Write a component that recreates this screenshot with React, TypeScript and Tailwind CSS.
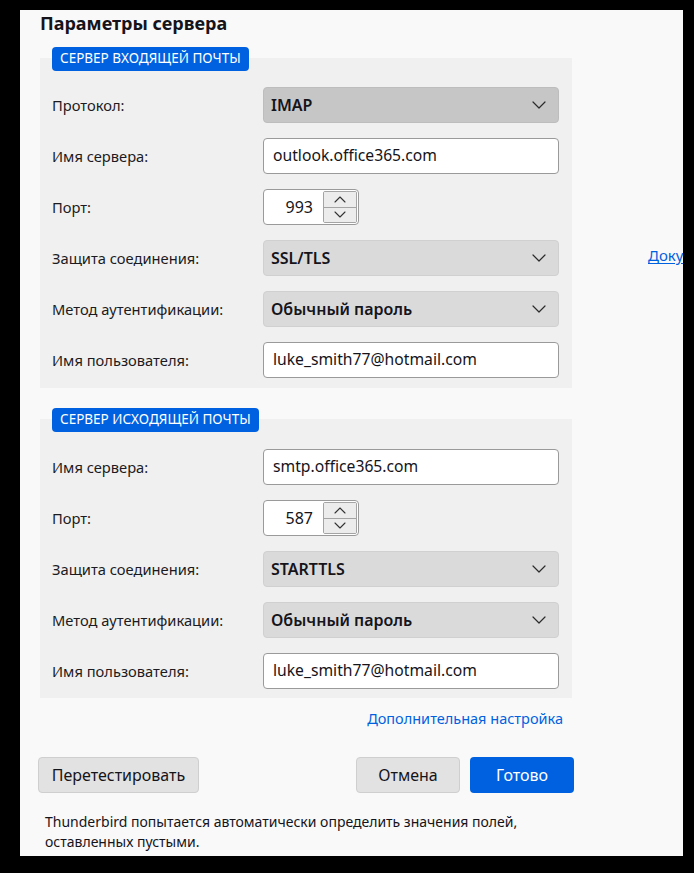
import React from "react";

const Chevron = () => (
  <svg width="14" height="8" viewBox="0 0 14 8" fill="none" className="shrink-0">
    <path d="M1 1l6 6 6-6" stroke="#2b2b2b" strokeWidth="1.2" strokeLinecap="round" strokeLinejoin="round" />
  </svg>
);

const SmallUp = () => (
  <svg width="12" height="7" viewBox="0 0 12 7" fill="none">
    <path d="M1 6l5-5 5 5" stroke="#333" strokeWidth="1.1" strokeLinecap="round" strokeLinejoin="round" />
  </svg>
);
const SmallDown = () => (
  <svg width="12" height="7" viewBox="0 0 12 7" fill="none">
    <path d="M1 1l5 5 5-5" stroke="#333" strokeWidth="1.1" strokeLinecap="round" strokeLinejoin="round" />
  </svg>
);

function Row({ label, children }: { label: string; children: React.ReactNode }) {
  return (
    <div className="flex items-center h-[36px]">
      <div className="w-[211px] shrink-0 text-[14.7px] text-[#1c1b22]">{label}</div>
      {children}
    </div>
  );
}

function Select({ value, dark }: { value: string; dark?: boolean }) {
  return (
    <div
      className={
        "flex items-center justify-between w-[296px] h-[36px] rounded-[4px] border pl-[7px] pr-[12px] " +
        (dark ? "bg-[#c6c6c6] border-[#bdbdbd]" : "bg-[#dadada] border-[#d0d0d0]")
      }
    >
      <span className="text-[16px] font-semibold text-[#15141a]">{value}</span>
      <Chevron />
    </div>
  );
}

function TextInput({ value }: { value: string }) {
  return (
    <div className="flex items-center w-[296px] h-[36px] rounded-[4px] border border-[#9a9a9a] bg-white px-[9px]">
      <span className="text-[15.7px] text-[#15141a]">{value}</span>
    </div>
  );
}

function Spinner({ value }: { value: string }) {
  return (
    <div className="flex items-center w-[96px] h-[36px] rounded-[4px] border border-[#9a9a9a] bg-white pl-[10px] pr-[1px]">
      <span className="flex-1 text-right pr-[10px] text-[16px] text-[#15141a]">{value}</span>
      <div className="flex flex-col w-[34px] h-[32px] border border-[#a4a4a4] rounded-[2px] overflow-hidden">
        <div className="flex-1 flex items-center justify-center bg-[#ececec] border-b border-[#a4a4a4]">
          <SmallUp />
        </div>
        <div className="flex-1 flex items-center justify-center bg-[#ececec]">
          <SmallDown />
        </div>
      </div>
    </div>
  );
}

function Badge({ text }: { text: string }) {
  return (
    <div className="self-start -mt-[11px] h-[24px] px-[8px] flex items-center rounded-[4px] bg-[#0061e0] text-white text-[13.5px] leading-none">
      {text}
    </div>
  );
}

export default function App() {
  return (
    <div
      className="w-[694px] h-[873px] bg-black pt-[10px] pl-[20px]"
      style={{ fontFamily: '"Noto Sans", "Open Sans", sans-serif' }}
    >
      <div className="w-[663px] h-[846px] bg-[#f9f9f9] overflow-hidden flex">
        <div className="w-[536px] shrink-0 ml-[18px] flex flex-col">
          <div className="h-[27px] pl-[2px] pt-[1px] text-[18px] font-bold text-[#15141a] leading-[24px]">
            Параметры сервера
          </div>

          <div className="mt-[21px] ml-[2px] w-[532px] bg-[#f0f0f0] pl-[12px] pr-[13px] pb-[10px] flex flex-col">
            <Badge text="СЕРВЕР ВХОДЯЩЕЙ ПОЧТЫ" />
            <div className="mt-[16px] flex flex-col gap-[15px]">
              <Row label="Протокол:"><Select value="IMAP" dark /></Row>
              <Row label="Имя сервера:"><TextInput value="outlook.office365.com" /></Row>
              <Row label="Порт:"><Spinner value="993" /></Row>
              <Row label="Защита соединения:"><Select value="SSL/TLS" /></Row>
              <Row label="Метод аутентификации:"><Select value="Обычный пароль" /></Row>
              <Row label="Имя пользователя:"><TextInput value="luke_smith77@hotmail.com" /></Row>
            </div>
          </div>

          <div className="mt-[31px] ml-[2px] w-[532px] bg-[#f0f0f0] pl-[12px] pr-[13px] pb-[9px] flex flex-col">
            <Badge text="СЕРВЕР ИСХОДЯЩЕЙ ПОЧТЫ" />
            <div className="mt-[17px] flex flex-col gap-[15px]">
              <Row label="Имя сервера:"><TextInput value="smtp.office365.com" /></Row>
              <Row label="Порт:"><Spinner value="587" /></Row>
              <Row label="Защита соединения:"><Select value="STARTTLS" /></Row>
              <Row label="Метод аутентификации:"><Select value="Обычный пароль" /></Row>
              <Row label="Имя пользователя:"><TextInput value="luke_smith77@hotmail.com" /></Row>
            </div>
          </div>

          <div className="mt-[10px] pr-[11px] flex justify-end">
            <span className="text-[14.5px] leading-[20px] text-[#0061e0]">Дополнительная настройка</span>
          </div>

          <div className="mt-[29px] flex items-center">
            <button className="h-[36px] w-[161px] rounded-[4px] border border-[#cfcfcf] bg-[#e2e2e2] text-[16px] text-[#15141a]">
              Перетестировать
            </button>
            <div className="flex-1" />
            <button className="h-[36px] w-[104px] rounded-[4px] border border-[#cfcfcf] bg-[#e2e2e2] text-[16px] text-[#15141a]">
              Отмена
            </button>
            <button className="ml-[10px] h-[36px] w-[104px] rounded-[4px] bg-[#0061e0] text-[16px] text-white">
              Готово
            </button>
          </div>

          <div className="mt-[19px] pl-[7px] text-[14px] leading-[20px] text-[#15141a]">
            Thunderbird попытается автоматически определить значения полей,
            <br />
            оставленных пустыми.
          </div>
        </div>

        <div className="ml-[74px] pt-[233px] whitespace-nowrap">
          <span className="text-[15px] leading-[20px] text-[#0061e0] underline underline-offset-2">Документация</span>
        </div>
      </div>
    </div>
  );
}
